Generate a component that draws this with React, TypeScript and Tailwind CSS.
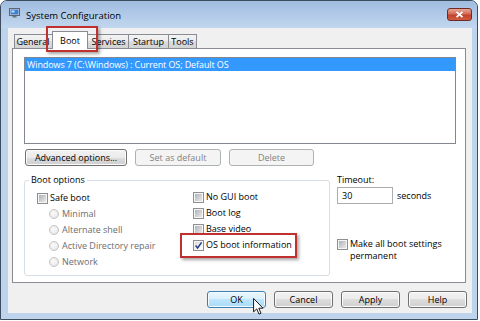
import React from "react";

function CheckBox({ checked = false }: { checked?: boolean }) {
  return (
    <span className="relative block w-[11px] h-[11px] shrink-0 border border-[#8e8f8f] bg-[#f6f6f6] p-[1px]">
      <span
        className={
          checked
            ? "block w-full h-full bg-[linear-gradient(135deg,#dcdcdc,#ffffff)]"
            : "block w-full h-full bg-[linear-gradient(135deg,#aeb2b7,#e9eaeb)]"
        }
      />
      {checked && (
        <svg className="absolute left-0 top-0" width="9" height="9" viewBox="0 0 9 9">
          <path d="M1.6 4.6 L3.6 7 L7.6 1.4" fill="none" stroke="#253f86" strokeWidth="1.5" />
        </svg>
      )}
    </span>
  );
}

function Radio() {
  return (
    <span className="block w-[10px] h-[10px] shrink-0 rounded-full border border-[#c3c3c3] bg-[radial-gradient(circle_at_40%_40%,#fbfbfb,#e2e2e2)]" />
  );
}

function Btn({ children, cls }: { children: React.ReactNode; cls: string }) {
  return (
    <div
      className={
        "h-[17px] rounded-[3px] border border-[#707070] bg-[linear-gradient(to_bottom,#f2f2f2_0%,#ebebeb_50%,#dddddd_50%,#cfcfcf_100%)] shadow-[inset_0_0_0_1px_#fbfbfb] flex items-center justify-center text-black " +
        cls
      }
    >
      {children}
    </div>
  );
}

function DisBtn({ children, cls }: { children: React.ReactNode; cls: string }) {
  return (
    <div
      className={
        "h-[17px] rounded-[3px] border border-[#adb2b5] bg-[#f4f4f4] flex items-center justify-center text-[#838383] " +
        cls
      }
    >
      {children}
    </div>
  );
}

export default function App() {
  return (
    <div className="relative w-[480px] h-[321px] overflow-hidden bg-white font-['Open_Sans','Noto_Sans',sans-serif] text-[9px] leading-[12px] text-black">
      <div className="flex flex-col w-[478px] h-[320px] rounded-t-[7px] border border-[#3d4c5e] bg-[#bed4ec] overflow-hidden">
        {/* Title bar */}
        <div className="flex items-center h-[27px] shrink-0 bg-[linear-gradient(to_bottom,#9fbde0,#b3cbe8_55%,#c2d7ef)] pl-[8px] pr-[5px]">
          <svg width="11" height="10" viewBox="0 0 11 10" className="-mt-[3px]">
            <rect x="0.5" y="0.5" width="10" height="7" fill="#d8dde3" stroke="#5d6670" />
            <rect x="1.5" y="1.5" width="8" height="5" fill="#3f7fd0" />
            <rect x="2.5" y="2.5" width="3" height="2" fill="#bfe0ff" />
            <rect x="3.5" y="8" width="4" height="1.5" fill="#6b7580" />
          </svg>
          <span className="ml-[6px] mt-[2px] text-[9.5px] text-black">System Configuration</span>
          <div className="flex-1" />
          <div className="w-[25px] h-[13px] rounded-[3px] border border-[#6e2b22] bg-[linear-gradient(to_bottom,#e8a797,#d46b58_45%,#c2412c_55%,#cf5c40)] flex items-center justify-center -mt-[1px]">
            <svg width="9" height="7" viewBox="0 0 9 7">
              <path d="M1.5 0.8 L7.5 6.2 M7.5 0.8 L1.5 6.2" stroke="#ffffff" strokeWidth="1.8" />
            </svg>
          </div>
        </div>

        {/* Client */}
        <div className="ml-[7px] w-[464px] h-[285px] shrink-0 bg-[#f0f0f0] flex flex-col">
          {/* Tabs */}
          <div className="flex items-end h-[20px] shrink-0 pl-[6px]">
            <div className="w-[40px] h-[14px] border border-b-0 border-[#898c95] bg-[linear-gradient(to_bottom,#f3f3f3,#ebebeb_50%,#dddddd_50%,#d2d2d2)] flex items-center justify-center pr-[2px]">
              General
            </div>
            <div className="relative z-10 w-[36px] h-[18px] -mx-[2px] -mb-[1px] border border-b-0 border-[#898c95] bg-white flex items-center justify-center">
              Boot
            </div>
            <div className="w-[43px] h-[14px] border border-b-0 border-[#898c95] bg-[linear-gradient(to_bottom,#f3f3f3,#ebebeb_50%,#dddddd_50%,#d2d2d2)] flex items-center justify-center pl-[2px]">
              Services
            </div>
            <div className="w-[40px] h-[14px] border border-b-0 border-l-0 border-[#898c95] bg-[linear-gradient(to_bottom,#f3f3f3,#ebebeb_50%,#dddddd_50%,#d2d2d2)] flex items-center justify-center">
              Startup
            </div>
            <div className="w-[28px] h-[14px] border border-b-0 border-l-0 border-[#898c95] bg-[linear-gradient(to_bottom,#f3f3f3,#ebebeb_50%,#dddddd_50%,#d2d2d2)] flex items-center justify-center">
              Tools
            </div>
          </div>

          {/* Panel */}
          <div className="ml-[4px] w-[454px] h-[235px] shrink-0 bg-white border border-[#898c95] flex flex-col">
            <div className="ml-[11px] mt-[8px] w-[432px] h-[87px] shrink-0 border border-[#828790] bg-white">
              <div className="h-[13px] bg-[#3399ff] text-white pl-[2px] leading-[13px] tracking-[-0.1px]">
                Windows 7 (C:\Windows) : Current OS; Default OS
              </div>
            </div>

            <div className="ml-[12px] mt-[5px] flex gap-[8px]">
              <Btn cls="w-[102px]">Advanced options...</Btn>
              <DisBtn cls="w-[86px]">Set as default</DisBtn>
              <DisBtn cls="w-[85px]">Delete</DisBtn>
            </div>

            <div className="ml-[11px] mt-[8px] flex">
              <fieldset className="w-[306px] h-[102px] border border-[#d5dfe5] rounded-[3px]">
                <legend className="ml-[4px] px-[2px] leading-[12px]">Boot options</legend>
                <div className="flex pt-[4px]">
                  <div className="w-[168px] pl-[12px] flex flex-col">
                    <div className="h-[16px] flex items-center gap-[2px]">
                      <CheckBox />
                      <span>Safe boot</span>
                    </div>
                    <div className="h-[16px] flex items-center gap-[3px] pl-[12px] text-[#6d6d6d]">
                      <Radio />
                      <span>Minimal</span>
                    </div>
                    <div className="h-[16px] flex items-center gap-[3px] pl-[12px] text-[#6d6d6d]">
                      <Radio />
                      <span>Alternate shell</span>
                    </div>
                    <div className="h-[16px] flex items-center gap-[3px] pl-[12px] text-[#6d6d6d]">
                      <Radio />
                      <span>Active Directory repair</span>
                    </div>
                    <div className="h-[16px] flex items-center gap-[3px] pl-[12px] text-[#6d6d6d]">
                      <Radio />
                      <span>Network</span>
                    </div>
                  </div>
                  <div className="flex flex-col -mt-[1px]">
                    <div className="h-[16px] flex items-center gap-[2px]">
                      <CheckBox />
                      <span>No GUI boot</span>
                    </div>
                    <div className="h-[16px] flex items-center gap-[2px]">
                      <CheckBox />
                      <span>Boot log</span>
                    </div>
                    <div className="h-[16px] flex items-center gap-[2px]">
                      <CheckBox />
                      <span>Base video</span>
                    </div>
                    <div className="h-[16px] flex items-center gap-[2px]">
                      <CheckBox checked />
                      <span>OS boot information</span>
                    </div>
                  </div>
                </div>
              </fieldset>

              <div className="ml-[7px] flex flex-col">
                <div className="leading-[12px]">Timeout:</div>
                <div className="mt-[1px] flex items-center">
                  <div className="w-[56px] h-[17px] border border-[#abadb3] bg-white flex items-center pl-[4px]">
                    30
                  </div>
                  <span className="ml-[4px]">seconds</span>
                </div>
                <div className="mt-[35px] flex items-start gap-[2px]">
                  <CheckBox />
                  <span className="leading-[12px] -mt-[1px]">
                    Make all boot settings
                    <br />
                    permanent
                  </span>
                </div>
              </div>
            </div>
          </div>

          {/* Bottom buttons */}
          <div className="mt-[8px] flex justify-end gap-[8px] pr-[5px]">
            <div className="w-[59px] h-[17px] rounded-[3px] border border-[#3c7fb1] bg-[linear-gradient(to_bottom,#eaf6fd_0%,#d9f0fc_50%,#bee6fd_50%,#a7d9f5_100%)] shadow-[inset_0_0_0_1px_#f4fbff] flex items-center justify-center">
              OK
            </div>
            <Btn cls="w-[59px]">Cancel</Btn>
            <Btn cls="w-[59px]">Apply</Btn>
            <Btn cls="w-[59px]">Help</Btn>
          </div>
        </div>
      </div>

      {/* Annotation boxes */}
      <div className="absolute left-[46px] top-[26px] w-[52px] h-[26px] border-2 border-[#c0302e] shadow-[2px_2px_3px_rgba(0,0,0,0.35)] z-20" />
      <div className="absolute left-[180px] top-[233px] w-[117px] h-[25px] border-2 border-[#c0302e] shadow-[2px_2px_3px_rgba(0,0,0,0.35)] z-20" />

      {/* Cursor */}
      <svg className="absolute left-[253px] top-[298px] z-30" width="11" height="17" viewBox="0 0 12 19">
        <path d="M0.5 0.5 L0.5 15.5 L4 12.2 L6.6 18 L8.8 17 L6.3 11.4 L11 11.4 Z" fill="#ffffff" stroke="#000000" strokeWidth="1" strokeLinejoin="round" />
      </svg>
    </div>
  );
}
